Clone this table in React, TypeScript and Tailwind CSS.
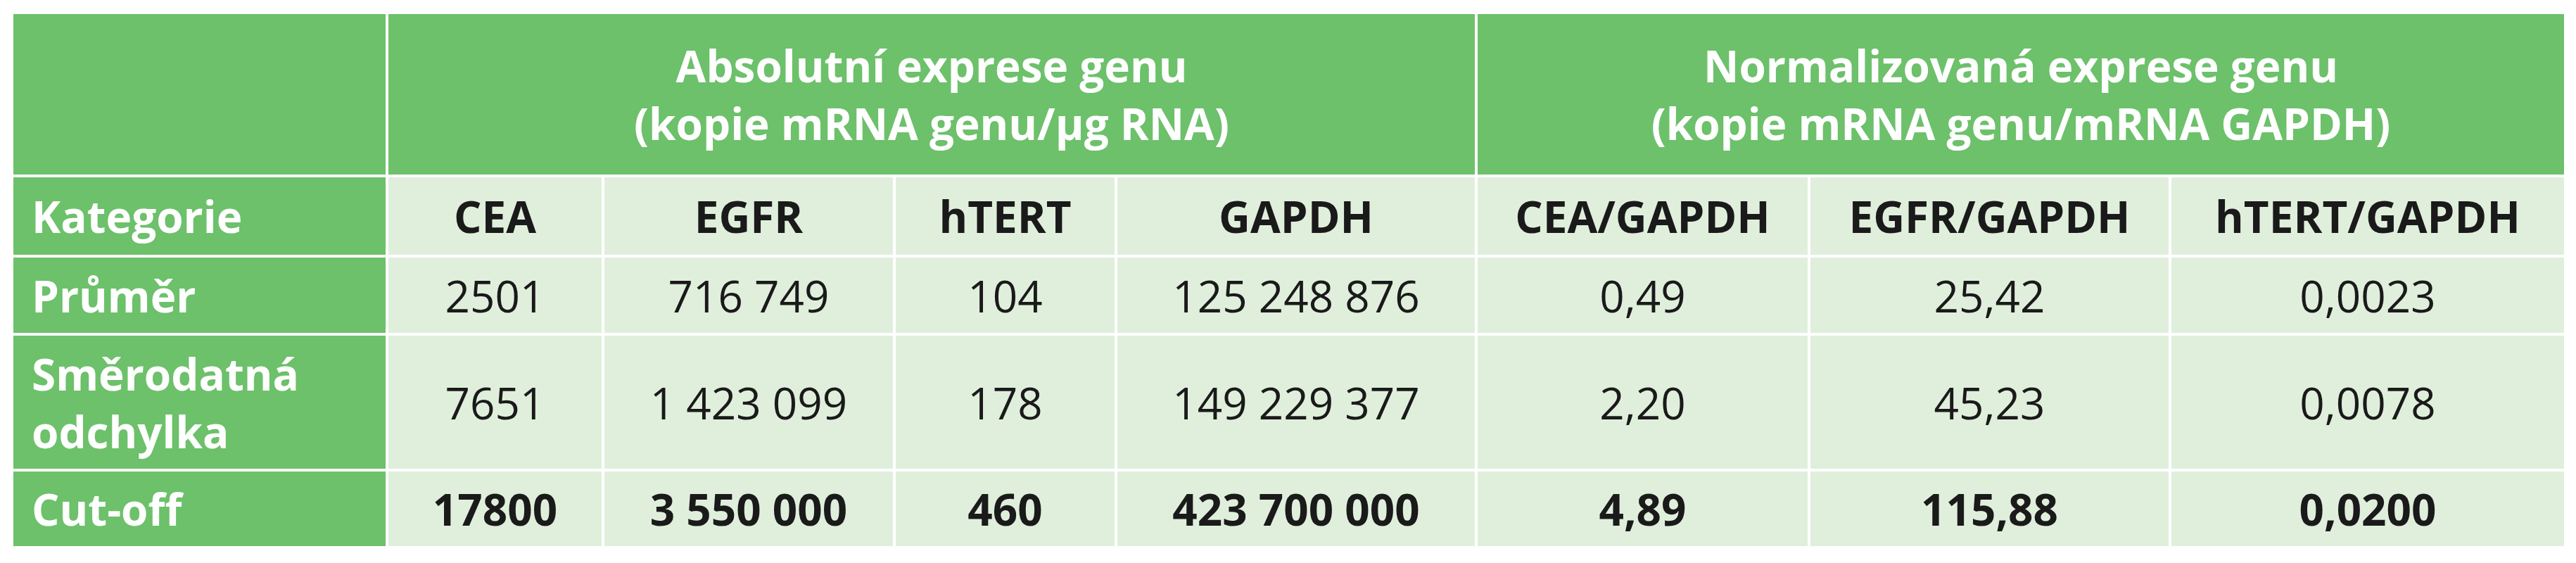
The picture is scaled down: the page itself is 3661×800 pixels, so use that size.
import React from "react";

const G = "bg-[#6cc16a] text-white font-bold";
const L = "bg-[#e0efdc] text-[#1a1a1a]";

const cols = ["CEA", "EGFR", "hTERT", "GAPDH", "CEA/GAPDH", "EGFR/GAPDH", "hTERT/GAPDH"];
const rows: { label: string[]; values: string[]; bold?: boolean }[] = [
  { label: ["Průměr"], values: ["2501", "716 749", "104", "125 248 876", "0,49", "25,42", "0,0023"] },
  { label: ["Směrodatná", "odchylka"], values: ["7651", "1 423 099", "178", "149 229 377", "2,20", "45,23", "0,0078"] },
  { label: ["Cut-off"], values: ["17800", "3 550 000", "460", "423 700 000", "4,89", "115,88", "0,0200"], bold: true },
];

export default function App() {
  return (
    <div className="w-[3661px] h-[800px] bg-white pt-[20px] pl-[19px] font-['Open_Sans',sans-serif] text-[62px] leading-[82px]">
      <div className="grid grid-cols-[529px_303px_410px_311px_508px_469px_509px_558px] grid-rows-[228px_110px_107px_189px_106px] gap-[4px] w-[3625px] bg-white">
        <div className={G}></div>
        <div className={`${G} col-span-4 flex flex-col items-center justify-center text-center`}>
          <span>Absolutní exprese genu</span>
          <span>(kopie mRNA genu/µg RNA)</span>
        </div>
        <div className={`${G} col-span-3 flex flex-col items-center justify-center text-center`}>
          <span>Normalizovaná exprese genu</span>
          <span>(kopie mRNA genu/mRNA GAPDH)</span>
        </div>

        <div className={`${G} flex items-center pl-[26px]`}>Kategorie</div>
        {cols.map((c) => (
          <div key={c} className={`${L} font-bold flex items-center justify-center`}>
            {c}
          </div>
        ))}

        {rows.map((r) => (
          <React.Fragment key={r.label.join(" ")}>
            <div className={`${G} flex flex-col justify-center pl-[26px]`}>
              {r.label.map((l) => (
                <span key={l}>{l}</span>
              ))}
            </div>
            {r.values.map((v, i) => (
              <div
                key={i}
                className={`${L} ${r.bold ? "font-bold" : "font-normal"} flex items-center justify-center whitespace-nowrap`}
              >
                {v}
              </div>
            ))}
          </React.Fragment>
        ))}
      </div>
    </div>
  );
}
